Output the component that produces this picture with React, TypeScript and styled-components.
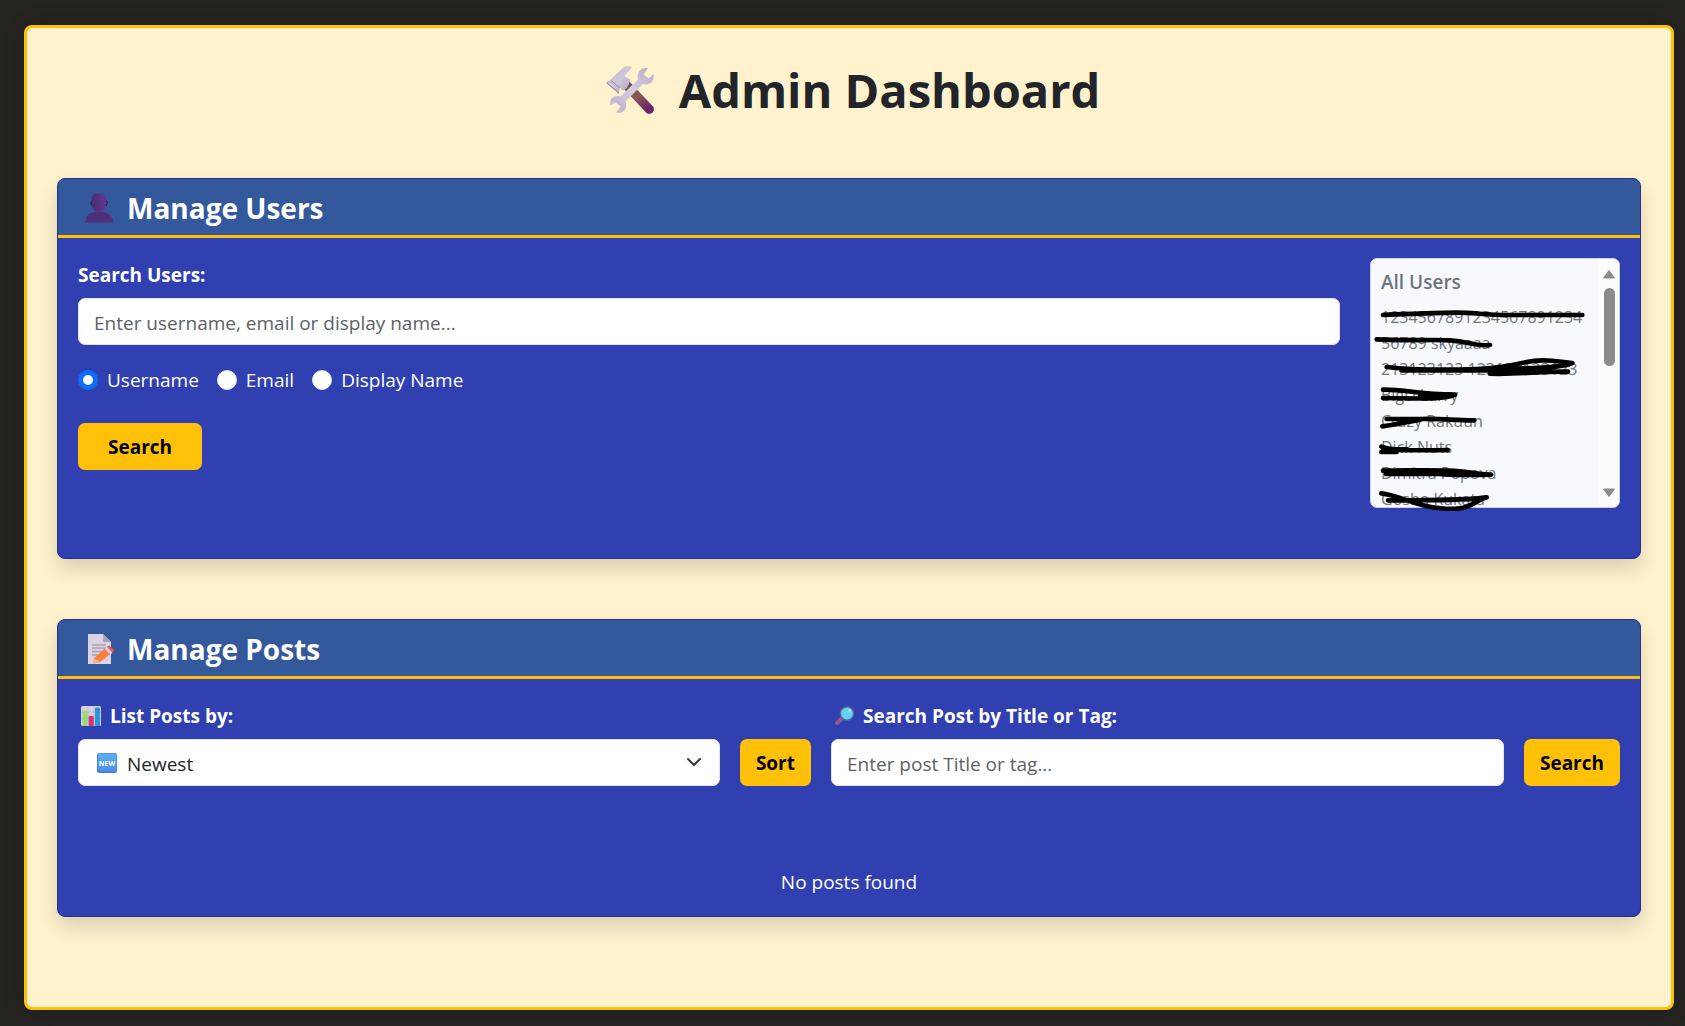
import React, { useRef, useState } from "react";
import styled, { createGlobalStyle } from "styled-components";

const GlobalStyle = createGlobalStyle`
  *, *::before, *::after { box-sizing: border-box; }
  body {
    margin: 0;
    background: #262522;
    color: #212529;
    font-family: "Segoe UI", "Open Sans", "Noto Sans", sans-serif;
    font-size: 19px;
    line-height: 30px;
  }
  button, input, select { font: inherit; }
`;

const Page = styled.div`
  padding: 25px 11px 16px 24px;
`;

const Panel = styled.main`
  padding: 30px 30px 90px;
  border: 3px solid #ffc107;
  border-radius: 8px;
  background: #fff2cd;
  box-shadow: 0 0 30px rgba(20, 18, 24, 0.4);
`;

const Title = styled.h1`
  display: flex;
  align-items: center;
  justify-content: center;
  gap: 25px;
  margin: 0 0 56px;
  padding-left: 8px;
  font-size: 47px;
  line-height: 64px;
  font-weight: 700;
`;

const Cards = styled.div`
  display: flex;
  flex-direction: column;
  gap: 60px;
`;

const Card = styled.section`
  border: 1px solid #25338f;
  border-radius: 8px;
  background: #3040b0;
  color: #fff;
  box-shadow: 0 10px 20px rgba(0, 0, 0, 0.15);
`;

const CardHeader = styled.header`
  display: flex;
  align-items: center;
  gap: 10px;
  padding: 9px 23px 7px;
  border-bottom: 3px solid #ffc107;
  border-radius: 7px 7px 0 0;
  background: #33589c;
`;

const CardTitle = styled.h2`
  margin: 0;
  font-size: 28px;
  line-height: 40px;
  font-weight: 700;
`;

const UsersBody = styled.div`
  display: flex;
  align-items: flex-start;
  gap: 30px;
  padding: 20px 20px 50px;
`;

const UserForm = styled.form`
  flex: 1;
  min-width: 0;
`;

const Label = styled.label`
  display: flex;
  align-items: center;
  gap: 8px;
  height: 32px;
  padding-top: 2px;
  margin-bottom: 8px;
  font-weight: 700;
`;

const TextInput = styled.input`
  display: block;
  width: 100%;
  height: 47px;
  padding: 2px 15px 0;
  border: 1px solid #dee2e6;
  border-radius: 7px;
  background: #fff;
  color: #212529;
  &::placeholder { color: #5c6166; opacity: 1; }
`;

const Radios = styled.fieldset`
  display: flex;
  gap: 18px;
  margin: 20px 0 28px;
  padding: 0;
  border: 0;
`;

const RadioLabel = styled.label`
  display: flex;
  align-items: center;
  gap: 9px;
  height: 30px;
`;

const Radio = styled.input`
  appearance: none;
  width: 20px;
  height: 20px;
  margin: 0;
  border: 1px solid #dee2e6;
  border-radius: 50%;
  background: #fff;
  &:checked { border: 5px solid #0d6efd; }
`;

const Button = styled.button<{ $wide?: boolean }>`
  height: 47px;
  padding: 0 ${(p) => (p.$wide ? 30 : 16)}px;
  border: 0;
  border-radius: 7px;
  background: #ffc107;
  color: #000;
  font-weight: 700;
  cursor: pointer;
`;

const UserBox = styled.aside`
  position: relative;
  display: flex;
  width: 250px;
  height: 250px;
  border: 1px solid #ced4da;
  border-radius: 7px;
  background: #f8f9fc;
  color: #6c757d;
`;

const UserScroll = styled.div`
  flex: 1;
  min-width: 0;
  padding: 8px 0 10px 10px;
  overflow-y: scroll;
  scrollbar-width: none;
`;

const UserHeading = styled.h3`
  margin: 0 0 7px;
  font-size: 19px;
  line-height: 30px;
  font-weight: 600;
`;

const UserList = styled.ul`
  margin: 0;
  padding: 0;
  list-style: none;
  font-size: 16px;
  line-height: 26px;
  overflow-wrap: anywhere;
`;

const ScrollTrack = styled.div`
  display: flex;
  flex-direction: column;
  align-items: center;
  width: 20px;
  padding: 10px 0 9px;
  border-radius: 0 6px 6px 0;
  background: #fcfcfc;
`;

const ScrollButton = styled.button`
  width: 14px;
  height: 10px;
  padding: 0;
  border: 0;
  background: none;
  svg { display: block; }
`;

const ThumbArea = styled.div`
  flex: 1;
  padding: 9px 0;
`;

const Thumb = styled.div`
  width: 11px;
  height: 78px;
  border-radius: 6px;
  background: #8b8b8b;
`;

const Scribbles = styled.svg`
  position: absolute;
  top: -1px;
  left: -1px;
  width: 250px;
  height: 250px;
  overflow: visible;
  pointer-events: none;
`;

const PostsBody = styled.div`
  padding: 20px 20px 19px;
`;

const PostForm = styled.form`
  display: grid;
  grid-template-columns: 1fr auto;
  column-gap: 20px;
`;

const PostGrid = styled.div`
  display: grid;
  grid-template-columns: 733fr 789fr;
  gap: 20px;
`;

const PostLabel = styled(Label)`
  grid-column: 1 / -1;
  padding-left: 3px;
`;

const SelectWrap = styled.div`
  position: relative;
`;

const Select = styled.select`
  appearance: none;
  display: block;
  width: 100%;
  height: 47px;
  padding: 2px 48px 0;
  border: 1px solid #dee2e6;
  border-radius: 7px;
  background: #fff;
  color: #212529;
`;

const SelectMark = styled.span<{ $side: "left" | "right" }>`
  position: absolute;
  top: 0;
  bottom: 0;
  ${(p) => p.$side}: 19px;
  display: flex;
  align-items: center;
  pointer-events: none;
`;

const Empty = styled.p`
  margin: 81px 0 0;
  text-align: center;
`;

const ToolsIcon = () => (
  <svg width="48" height="48" viewBox="0 0 48 48" aria-hidden="true">
    <defs>
      <linearGradient id="tHandle" x1="0" y1="0" x2="0.6" y2="1">
        <stop offset="0" stopColor="#6e3b42" />
        <stop offset="0.55" stopColor="#8c5a55" />
        <stop offset="1" stopColor="#6c2468" />
      </linearGradient>
      <linearGradient id="tHead" x1="0" y1="0" x2="1" y2="1">
        <stop offset="0" stopColor="#bdb4c8" />
        <stop offset="0.5" stopColor="#cfc7da" />
        <stop offset="1" stopColor="#a79fb4" />
      </linearGradient>
      <linearGradient id="tWrench" x1="1" y1="0" x2="0" y2="1">
        <stop offset="0" stopColor="#b5acc2" />
        <stop offset="0.5" stopColor="#d6cfe2" />
        <stop offset="0.8" stopColor="#c2b9cf" />
        <stop offset="1" stopColor="#d3c2ee" />
      </linearGradient>
    </defs>
    <path d="M16 21 22 14 47 40.500C50 44.500 45 50 40.500 47Z" fill="url(#tHandle)" />
    <path d="M3.500 14.500 18 1Q22-.8 26 1.200L18.500 10 24 13.500Q24 18 20 23L16.500 24.500 14 21.500 12.500 28 0 17Q1 14.500 3.500 14.500Z" fill="url(#tHead)" />
    <path d="m1 17 12 10M5 14.500l9 7.500" stroke="#9389a2" strokeWidth="1" />
    <path d="M42 2C36 .5 30 6 32 13.500L14.500 30.500C8 28.500 2.500 33 4.500 39.500L9.500 36.500 14.500 40.500 10 46.500C16 48.500 22.500 43 19.500 35.500L37 18C43 20 49 15 47.500 8L42.500 12.500 37.500 8.500Z" fill="url(#tWrench)" />
  </svg>
);

const PersonIcon = () => (
  <svg width="36" height="30" viewBox="0 0 36 30" aria-hidden="true">
    <defs>
      <linearGradient id="pHead" x1="0" x2="1">
        <stop offset="0" stopColor="#4b2a72" />
        <stop offset="1" stopColor="#613b92" />
      </linearGradient>
    </defs>
    <path d="M4 29.500C4 21 12 18.500 18 18.500S32 21 32 29.500Z" fill="#50307c" />
    <path d="M11 5C11 1 14 .5 18 .5S25 1 25 5L26.500 9 25 13C24 17 21 19 18 19S12 17 11 13L9.500 10Z" fill="url(#pHead)" />
    <path d="m25 8 1.500 1.500L25 13M11 9l-1.500 1 1.500 3" stroke="#34164f" fill="none" />
  </svg>
);

const MemoIcon = () => (
  <svg width="36" height="30" viewBox="0 0 36 30" aria-hidden="true">
    <path d="M7 0H22L30 8V30H7Z" fill="#dad3e3" />
    <path d="M22 0v7q0 1 1 1h7Z" fill="#aaa1b6" />
    <path d="M11 11h14M11 14h14M11 17.500h11M11 21h7" stroke="#aaa3b2" strokeWidth="1.300" />
    <path d="m13 24 11-9.500 5.500 5.500-10.500 8-7 1.500Z" fill="#fb8037" />
    <path d="m13 24 6 4-7 1.800Z" fill="#eab98e" />
    <path d="m24 15 2-2 5.500 5.500-2 2Z" fill="#ddd2ec" />
    <path d="m26 13 2-1.500 5.500 4.500-2 2.500Z" fill="#f4504e" />
  </svg>
);

const ChartIcon = () => (
  <svg width="21" height="20" viewBox="0 0 21 20" aria-hidden="true">
    <rect x="0" width="20" height="20" rx="1.500" fill="#dad2e4" />
    <path d="M0 6h20M0 12.500h20M7 0v20M13 0v20" stroke="#b7adc4" strokeWidth=".8" />
    <rect x="1.500" y="4.500" width="5" height="15.500" rx=".8" fill="#93de68" />
    <rect x="7.700" y="10" width="5" height="10" rx=".8" fill="#dd2f78" />
    <rect x="14" y="1.500" width="5" height="18.500" rx=".8" fill="#2995dd" />
  </svg>
);

const MagnifierIcon = () => (
  <svg width="21" height="20" viewBox="0 0 21 20" aria-hidden="true">
    <path d="m3 17 6-5.500" stroke="#93559b" strokeWidth="4.200" strokeLinecap="round" />
    <circle cx="13" cy="7.500" r="6.700" fill="#65d1f1" stroke="#53658c" strokeWidth="1.400" />
    <circle cx="15.500" cy="4.500" r="1.200" fill="#b2edfb" />
  </svg>
);

const NewIcon = () => (
  <svg width="20" height="20" viewBox="0 0 20 20" aria-hidden="true">
    <defs>
      <linearGradient id="nBlue" x1="0" y1="0" x2="0" y2="1">
        <stop offset="0" stopColor="#5aaefa" />
        <stop offset="1" stopColor="#4b8eeb" />
      </linearGradient>
    </defs>
    <rect width="20" height="20" rx="2.500" fill="#407fdd" />
    <rect x="1" y="0.500" width="18.500" height="18" rx="2" fill="url(#nBlue)" />
    <text x="10" y="12.500" textAnchor="middle" fontSize="7" fontWeight="700" fill="#fff">NEW</text>
  </svg>
);

const users = [
  "1234567891234567891234 56789 skyaaaa",
  "213123123 123123123123",
  "BigD Larry",
  "Crazy Rakuun",
  "Dick Nuts",
  "Dimitra Popova",
  "Gosho Kukata",
];

const searchFields = ["Username", "Email", "Display Name"];

const hold = (e: React.FormEvent) => e.preventDefault();

export default function App() {
  const [field, setField] = useState("Username");
  const listRef = useRef<HTMLDivElement>(null);
  const scroll = (by: number) => listRef.current?.scrollBy({ top: by });

  return (
    <>
      <GlobalStyle />
      <Page>
        <Panel>
          <Title><ToolsIcon />Admin Dashboard</Title>
          <Cards>
            <Card>
              <CardHeader><PersonIcon /><CardTitle>Manage Users</CardTitle></CardHeader>
              <UsersBody>
                <UserForm onSubmit={hold}>
                  <Label htmlFor="user-query">Search Users:</Label>
                  <TextInput id="user-query" placeholder="Enter username, email or display name..." />
                  <Radios aria-label="Search by">
                    {searchFields.map((name) => (
                      <RadioLabel key={name}>
                        <Radio type="radio" name="field" checked={field === name} onChange={() => setField(name)} />
                        {name}
                      </RadioLabel>
                    ))}
                  </Radios>
                  <Button $wide type="submit">Search</Button>
                </UserForm>
                <UserBox>
                  <UserScroll ref={listRef}>
                    <UserHeading>All Users</UserHeading>
                    <UserList>{users.map((u) => <li key={u}>{u}</li>)}</UserList>
                  </UserScroll>
                  <ScrollTrack>
                    <ScrollButton type="button" aria-label="Scroll up" onClick={() => scroll(-26)}>
                      <svg width="14" height="10" viewBox="0 0 14 10"><path d="M7 1.500 12.500 9h-11Z" fill="#8b8b8b" stroke="#8b8b8b" strokeLinejoin="round" /></svg>
                    </ScrollButton>
                    <ThumbArea><Thumb /></ThumbArea>
                    <ScrollButton type="button" aria-label="Scroll down" onClick={() => scroll(26)}>
                      <svg width="14" height="10" viewBox="0 0 14 10"><path d="M7 8.500 1.500 1h11Z" fill="#8b8b8b" stroke="#8b8b8b" strokeLinejoin="round" /></svg>
                    </ScrollButton>
                  </ScrollTrack>
                  <Scribbles viewBox="90 54 750 750" aria-hidden="true">
                    <g fill="none" stroke="#000" strokeWidth="14" strokeLinecap="round" strokeLinejoin="round">
                      <path d="M129 225C220 222 300 218 350 218S440 225 500 225H727" />
                      <path d="M110 298C200 303 270 298 330 301S400 320 450 315" />
                      <path d="M140 381C210 389 330 390 410 387S520 375 560 366 640 362 697 369C670 384 560 386 450 387M184 391H450M450 401C540 404 600 393 684 395M460 394H600" />
                      <path d="M129 449C190 448 230 462 345 464 310 480 240 475 129 474M240 468H320" />
                      <path d="M140 537H240C300 534 350 542 403 541M240 540C200 545 170 554 127 559" />
                      <path d="M124 620C150 630 200 632 323 630M124 636H170M130 628H200" />
                      <path d="M129 692C210 692 300 688 360 694S420 703 453 704M138 702H300C350 708 400 704 453 704M145 697H290" />
                      <path d="M124 760C160 764 200 782 245 795S350 810 380 800 420 775 440 772C380 782 260 780 144 781" />
                    </g>
                  </Scribbles>
                </UserBox>
              </UsersBody>
            </Card>

            <Card>
              <CardHeader><MemoIcon /><CardTitle>Manage Posts</CardTitle></CardHeader>
              <PostsBody>
                <PostGrid>
                  <PostForm onSubmit={hold}>
                    <PostLabel htmlFor="sort"><ChartIcon />List Posts by:</PostLabel>
                    <SelectWrap>
                      <Select id="sort" defaultValue="newest">
                        <option value="newest">Newest</option>
                      </Select>
                      <SelectMark $side="left"><NewIcon /></SelectMark>
                      <SelectMark $side="right">
                        <svg width="14" height="14" viewBox="0 0 14 14" fill="none" stroke="#343a40" strokeWidth="2" strokeLinecap="round" strokeLinejoin="round" aria-hidden="true"><path d="m1 3 6 6 6-6" /></svg>
                      </SelectMark>
                    </SelectWrap>
                    <Button type="submit">Sort</Button>
                  </PostForm>
                  <PostForm onSubmit={hold}>
                    <PostLabel htmlFor="post-query"><MagnifierIcon />Search Post by Title or Tag:</PostLabel>
                    <TextInput id="post-query" placeholder="Enter post Title or tag..." />
                    <Button type="submit">Search</Button>
                  </PostForm>
                </PostGrid>
                <Empty>No posts found</Empty>
              </PostsBody>
            </Card>
          </Cards>
        </Panel>
      </Page>
    </>
  );
}
